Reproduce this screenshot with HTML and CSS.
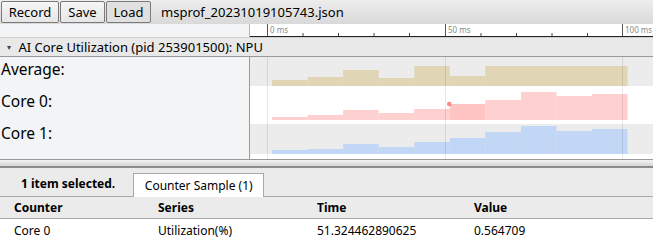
FILE: index.html
```html
<!DOCTYPE html>
<html lang="en">
<head>
    <meta charset="UTF-8">
    <title>msprof trace viewer</title>
    <link rel="stylesheet" href="styles.css">
</head>
<body>
    <div class="toolbar">
        <button class="btn btn-record">Record</button>
        <button class="btn">Save</button>
        <button class="btn btn-active">Load</button>
        <span class="filename">msprof_20231019105743.json</span>
    </div>

    <!-- time ruler -->
    <div class="ruler-row">
        <div class="ruler-left"></div>
        <svg class="ruler" width="403" height="13">
            <line x1="17.5" y1="0" x2="17.5" y2="12" stroke="#555"/>
            <line x1="195.5" y1="0" x2="195.5" y2="12" stroke="#555"/>
            <line x1="372.5" y1="0" x2="372.5" y2="12" stroke="#555"/>
            <g stroke="#444">
                <line x1="53" y1="9" x2="53" y2="12"/>
                <line x1="88.5" y1="9" x2="88.5" y2="12"/>
                <line x1="124" y1="9" x2="124" y2="12"/>
                <line x1="159.5" y1="9" x2="159.5" y2="12"/>
                <line x1="231" y1="9" x2="231" y2="12"/>
                <line x1="266.5" y1="9" x2="266.5" y2="12"/>
                <line x1="302" y1="9" x2="302" y2="12"/>
                <line x1="337.5" y1="9" x2="337.5" y2="12"/>
            </g>
            <line x1="0" y1="12.5" x2="403" y2="12.5" stroke="#222"/>
            <g class="ruler-label">
                <text x="20" y="9">0 ms</text>
                <text x="198" y="9">50 ms</text>
                <text x="375" y="9">100 ms</text>
            </g>
        </svg>
    </div>

    <div class="track-header"><span class="caret">&#9662;</span> AI Core Utilization (pid 253901500): NPU</div>

    <div class="track">
        <div class="track-labels">
            <div class="counter-label">Average:</div>
            <div class="counter-label">Core 0:</div>
            <div class="counter-label">Core 1:</div>
        </div>
        <svg class="chart" width="403" height="102">
            <rect x="0" y="0" width="403" height="29" fill="#ececec"/>
            <rect x="0" y="67" width="403" height="30" fill="#ececec"/>

            <!-- Average -->
            <g fill="#e0d6b6">
                <rect x="22" y="23" width="35.6" height="6"/>
                <rect x="57.6" y="20" width="35.6" height="9"/>
                <rect x="93.1" y="13" width="35.6" height="16"/>
                <rect x="128.7" y="21" width="35.6" height="8"/>
                <rect x="164.2" y="9" width="35.6" height="20"/>
                <rect x="199.8" y="19" width="35.6" height="10"/>
                <rect x="235.3" y="9" width="142.3" height="20"/>
            </g>

            <!-- Core 0 -->
            <g fill="#ffd0d0">
                <rect x="22" y="60" width="35.6" height="3"/>
                <rect x="57.6" y="58" width="35.6" height="5"/>
                <rect x="93.1" y="53" width="35.6" height="10"/>
                <rect x="128.7" y="56" width="35.6" height="7"/>
                <rect x="164.2" y="52" width="35.6" height="11"/>
                <rect x="235.3" y="43" width="35.6" height="20"/>
                <rect x="270.9" y="35" width="35.6" height="28"/>
                <rect x="306.4" y="39" width="35.6" height="24"/>
                <rect x="342" y="37" width="35.6" height="26"/>
            </g>
            <rect x="199.8" y="47" width="35.5" height="16" fill="#ffc4c4"/>
            <circle cx="199.3" cy="47" r="2.3" fill="#f98888"/>

            <!-- Core 1 -->
            <g fill="#c2d6f5">
                <rect x="22" y="93" width="35.6" height="4"/>
                <rect x="57.6" y="92" width="35.6" height="5"/>
                <rect x="93.1" y="87" width="35.6" height="10"/>
                <rect x="128.7" y="90" width="35.6" height="7"/>
                <rect x="164.2" y="85" width="35.6" height="12"/>
                <rect x="199.8" y="81" width="35.6" height="16"/>
                <rect x="235.3" y="75" width="35.6" height="22"/>
                <rect x="270.9" y="69" width="35.6" height="28"/>
                <rect x="306.4" y="74" width="35.6" height="23"/>
                <rect x="342" y="72" width="35.6" height="25"/>
            </g>

            <g stroke="#000" stroke-opacity="0.09">
                <line x1="17.5" y1="0" x2="17.5" y2="102"/>
                <line x1="195.5" y1="0" x2="195.5" y2="102"/>
                <line x1="372.5" y1="0" x2="372.5" y2="102"/>
            </g>
        </svg>
    </div>

    <div class="splitter"></div>

    <div class="tabbar">
        <span class="selection-info">1 item selected.</span>
        <span class="tab">Counter Sample (1)</span>
    </div>

    <table class="samples">
        <tr>
            <th>Counter</th>
            <th>Series</th>
            <th>Time</th>
            <th>Value</th>
        </tr>
        <tr>
            <td>Core 0</td>
            <td>Utilization(%)</td>
            <td>51.324462890625</td>
            <td>0.564709</td>
        </tr>
    </table>
</body>
</html>
```

FILE: styles.css
```css
body {
    margin: 0;
    padding: 0;
    width: 653px;
    height: 243px;
    overflow: hidden;
    background: #fff;
    font-family: "Noto Sans", "Open Sans", sans-serif;
    color: #000;
}
.toolbar {
    height: 24px;
    display: flex;
    align-items: center;
    gap: 1px;
    padding-left: 1px;
    box-sizing: border-box;
    background: linear-gradient(#ededed, #d9d9d9);
}
.btn {
    width: 45px;
    height: 22px;
    padding: 0;
    margin: 0;
    font-family: inherit;
    font-size: 13px;
    color: #000;
    border: 1px solid #7a7a7a;
    border-radius: 2px;
    background: linear-gradient(#f6f6f6, #e6e6e6);
}
.btn-record {
    width: 58px;
}
.btn-active {
    background: #e0e0e0;
}
.filename {
    margin-left: 9px;
    font-size: 13px;
}
.ruler-row {
    display: flex;
    height: 13px;
}
.ruler-left {
    width: 249px;
    background: #f3f4f6;
    border-right: 1px solid #b5b5b5;
}
.ruler {
    display: block;
    background: #fff;
}
.ruler-label {
    font-size: 8px;
    fill: #8a8a8a;
}
.track-header {
    height: 18px;
    line-height: 18px;
    padding-left: 7px;
    font-size: 13px;
    background: #e8e8e8;
    border-top: 1px solid #d0d0d0;
    border-bottom: 1px solid #9a9a9a;
}
.caret {
    font-size: 8px;
    color: #444;
    vertical-align: 2px;
    margin-right: 4px;
}
.track {
    display: flex;
    height: 102px;
    border-bottom: 1px solid #9a9a9a;
}
.track-labels {
    width: 249px;
    background: #f3f4f6;
    border-right: 1px solid #9a9a9a;
    display: flex;
    flex-direction: column;
    gap: 10px;
    padding-top: 1px;
}
.counter-label {
    font-size: 15.5px;
    line-height: 22px;
    padding-left: 1px;
}
.chart {
    display: block;
}
.splitter {
    height: 6px;
    background: linear-gradient(#f4f4f4, #d4d4d4);
    border-bottom: 2px solid #8c8c8c;
}
.tabbar {
    height: 29px;
    box-sizing: border-box;
    display: flex;
    align-items: flex-end;
    gap: 18px;
    padding-left: 21px;
    background: #ebebeb;
    border-bottom: 1px solid #a8a8a8;
}
.selection-info {
    font-weight: bold;
    font-size: 12px;
    line-height: 24px;
}
.tab {
    width: 131px;
    height: 24px;
    box-sizing: border-box;
    line-height: 24px;
    text-align: center;
    font-size: 12px;
    background: #fff;
    border: 1px solid #a8a8a8;
    border-bottom: none;
    margin-bottom: -1px;
}
.samples {
    width: 100%;
    border-collapse: collapse;
    font-size: 12px;
}
.samples th {
    text-align: left;
    font-weight: bold;
    height: 21px;
    padding: 0 0 0 14px;
    background: #ebebeb;
    border-bottom: 1px solid #a8a8a8;
}
.samples td {
    height: 23px;
    padding: 0 0 0 14px;
}
.samples th:nth-child(1) { width: 130px; }
.samples th:nth-child(2) { width: 145px; }
.samples th:nth-child(3) { width: 143px; }
```
